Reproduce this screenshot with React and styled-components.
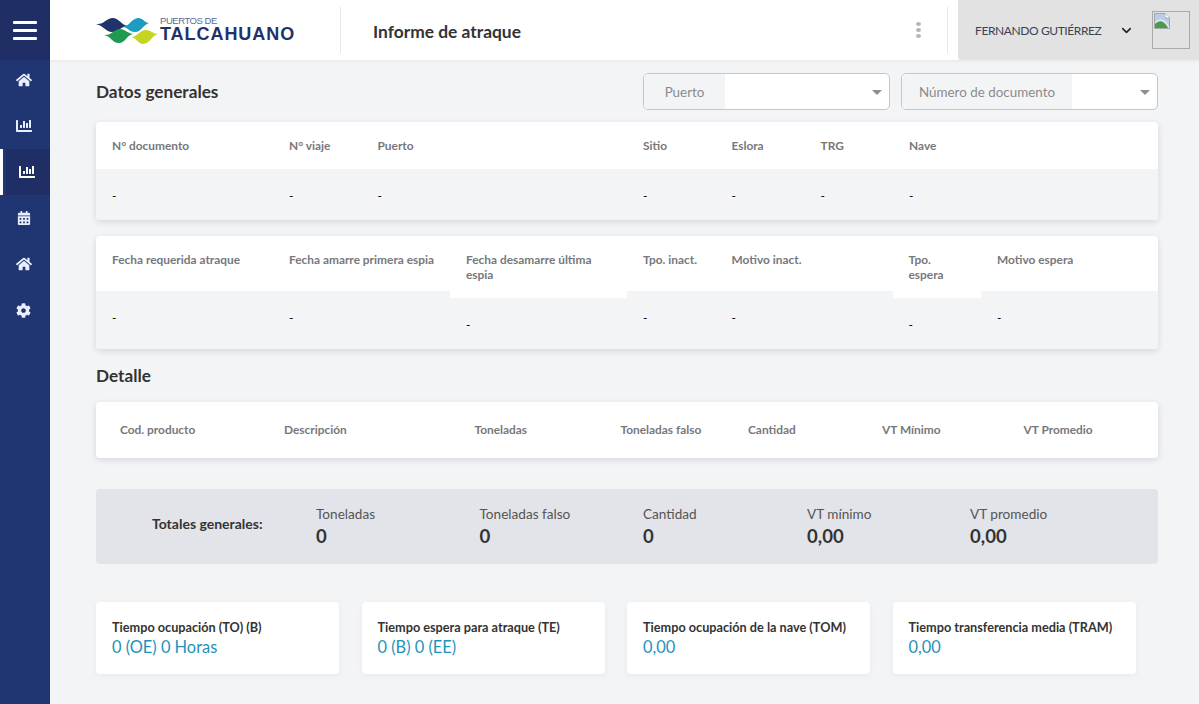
import React from "react";
import styled, { createGlobalStyle } from "styled-components";
import { FaHome, FaChartBar, FaCalendarAlt, FaCog } from "react-icons/fa";
import { LuChevronDown } from "react-icons/lu";

const Global = createGlobalStyle`
  html, body { margin: 0; padding: 0; height: 100%; overflow: hidden; }
  body { background: #f3f4f6; font-family: "Lato", "Noto Sans", sans-serif; color: #333; }
  * { box-sizing: border-box; }
`;

const Shell = styled.div`display: flex; width: 1199px; height: 704px; overflow: hidden;`;
const Sidebar = styled.nav`width: 50px; flex: none; background: #203673; display: flex; flex-direction: column;`;
const Burger = styled.div`
  height: 60px; background: #1f2f66; display: flex; flex-direction: column; justify-content: center; align-items: center; gap: 5px;
  span { display: block; width: 24px; height: 3px; background: #fff; border-radius: 1px; }
`;
const NavItem = styled.div`
  height: ${p => p.$h || 46}px; display: flex; align-items: center; justify-content: center; color: #e8eefc; font-size: 16px;
  padding-right: 3px;
  ${p => p.$first && `padding-bottom: 4px;`}
  ${p => p.$active && `
    color: #fff; padding-right: 0; border-left: 3px solid #fff;
    background: linear-gradient(to right, #203673 3px, #1f2f66 3px);
  `}
`;
const Main = styled.div`flex: 1; min-width: 0; display: flex; flex-direction: column;`;
const Header = styled.header`
  height: 60px; flex: none; background: #fff; display: flex; align-items: center; box-shadow: 0 1px 3px rgba(0,0,0,.06); position: relative;
`;
const LogoWrap = styled.div`width: 290px; height: 60px; flex: none; padding-left: 46px; display: flex; align-items: center; gap: 2px;`;
const LogoText = styled.div`display: flex; flex-direction: column; line-height: 1; margin-top: -2px;`;
const LogoTop = styled.span`font-size: 9.5px; color: #5c6b98; letter-spacing: -.45px; font-family: "Liberation Sans", sans-serif; line-height: 10px;`;
const LogoBottom = styled.span`font-size: 18px; font-weight: 700; color: #1f3269; letter-spacing: .95px; font-family: "Liberation Sans", sans-serif; line-height: 17px;`;
const VRule = styled.div`width: 1px; height: 46px; background: #e6e7ea;`;
const PageTitle = styled.h1`margin: 2px 0 0 32px; font-size: 17.4px; font-weight: 700; color: #333; flex: 1;`;
const Dots = styled.div`
  width: 4px; display: flex; flex-direction: column; gap: 2px; margin-right: 27px;
  i { width: 5px; height: 4px; border-radius: 50%; background: #b5b5b5; display: block; }
`;
const User = styled.div`
  width: 241px; height: 60px; margin-left: 10px; background: #e2e2e2; border-bottom-left-radius: 3px; display: flex; align-items: center; padding-left: 17px; color: #3a4257; font-size: 12px; letter-spacing: -.4px;
`;
const UserName = styled.span`width: 144px; white-space: nowrap;`;
const Avatar = styled.div`width: 38px; height: 38px; border: 1px solid #a9a9a9; margin-left: 18px; padding: 1px;`;

const Content = styled.main`flex: 1; padding: 13px 41px 0 46px; display: flex; flex-direction: column;`;
const TopRow = styled.div`display: flex; align-items: center; height: 37px;`;
const SectionTitle = styled.h2`margin: 0; font-size: 17.2px; font-weight: 700; color: #333; flex: 1;`;
const DetailTitle = styled(SectionTitle)`flex: none; margin-top: 16px; line-height: 22px;`;
const Select = styled.div`
  width: ${p => p.$w}px; height: 37px; margin-left: ${p => p.$ml || 0}px; display: flex; background: #fff; border: 1px solid #c6c7c9; border-radius: 5px; overflow: hidden; position: relative;
`;
const SelectLabel = styled.div`
  width: ${p => p.$w}px; background: #f3f4f6; color: #8b8b8b; font-size: 13.4px; display: flex; align-items: center; justify-content: center;
`;
const Caret = styled.i`
  position: absolute; right: 7px; top: 16px; width: 0; height: 0; border-left: 5px solid transparent; border-right: 5px solid transparent; border-top: 5px solid #8e8e8e;
`;
const Card = styled.section`
  background: #fff; border-radius: 4px; box-shadow: 0 2px 6px rgba(30,40,80,.14); overflow: hidden; margin-top: ${p => p.$mt}px;
`;
const GridRow = styled.div`
  display: grid; grid-template-columns: ${p => p.$cols}; height: ${p => p.$h}px; background: ${p => p.$bg || "transparent"};
`;
const Cell = styled.div`
  padding: ${p => p.$pt}px 16px 0 16px; font-size: 11.9px; line-height: 15px; background: ${p => p.$bg || "transparent"}; color: ${p => p.$dark ? "#000" : "#77787c"}; font-weight: ${p => p.$dark ? 400 : 700}; height: ${p => p.$h ? p.$h + "px" : "auto"}; position: relative; z-index: 1;
  margin-right: ${p => p.$tight ? -6 : 0}px; padding-right: ${p => p.$tight ? 6 : 16}px;
`;
const Detail = styled.div`
  display: grid; grid-template-columns: 164px 190.5px 146px 127.5px 134px 141.5px 1fr; height: 56px; align-items: center; padding: 0 0 2px 24px; color: #77787c; font-size: 11.9px; font-weight: 700;
`;
const Totals = styled.section`
  height: 75px; margin-top: 31px; background: #e2e4e9; border-radius: 4px; display: grid; grid-template-columns: 220px 163.5px 163.5px 164px 163px 1fr; align-items: center; color: #333;
`;
const TotalHead = styled.div`font-size: 14px; font-weight: 700; padding-left: 56px; white-space: nowrap; margin-top: -6px;`;
const TotalCol = styled.div`display: flex; flex-direction: column; font-size: 13.6px; color: #555; line-height: 17px; margin-top: 3px;`;
const TotalVal = styled.b`font-size: 18.6px; color: #333; line-height: 27px;`;
const Kpis = styled.div`display: flex; gap: 22.5px; margin-top: 38px;`;
const Kpi = styled.div`
  width: 243px; height: 72px; background: #fff; border-radius: 4px; padding: 18px 16px 0; box-shadow: 0 2px 6px rgba(30,40,80,.05);
`;
const KpiTitle = styled.div`font-size: 12.7px; font-weight: 700; color: #333; line-height: 15px; white-space: nowrap;`;
const KpiValue = styled.div`font-size: 16.4px; color: #1f93b8; line-height: 21px; margin-top: 1px; white-space: nowrap;`;

const Waves = () => (
  <svg width="62" height="27" viewBox="0 0 62 27">
    <path d="M0 7 C8 8 10 1 17 1 C22 1 25 7 31 9 C25 10 22 15 16 15 C10 15 8 9 0 7Z" fill="#1f3269" />
    <path d="M26 10 C33 10 36 1 42 1 C47 1 49 6 53 6 C47 8 45 15 39 15 C33 15 32 10 26 10Z" fill="#1c9cc0" />
    <path d="M8 18 C15 19 18 12 24 12 C29 12 31 16 37 17 C31 18 29 26 23 26 C16 26 15 19 8 18Z" fill="#1f9a50" />
    <path d="M35 20 C41 20 44 13 50 13 C55 13 57 17 62 17 C56 18 54 27 47 27 C42 27 41 21 35 20Z" fill="#c4d420" />
  </svg>
);

const BrokenImage = () => (
  <svg width="16" height="16" viewBox="0 0 16 16">
    <path d="M.5.5H11L15.5 5V15.5H.5Z" fill="#dfe8f2" stroke="#a4a8ad" />
    <path d="M1 15 L1 11 C5 7 9 7 13 13 L14 15Z" fill="#4f9a48" />
    <path d="M1 9 L1 1 L10 1 L10 5 L15 5 L15 13 C10 5 5 5 1 9Z" fill="#b8cde8" />
    <path d="M11 .5V5H15.5" fill="#fff" stroke="#a4a8ad" />
  </svg>
);

const cols = "177px 88.5px 265.5px 88.5px 89px 88.5px 88.5px 1fr";
const cols2 = "177px 177px 177px 88.5px 177px 88.5px 1fr";

const row1 = ["N° documento", "N° viaje", "Puerto", "Sitio", "Eslora", "TRG", "Nave", ""];
const row2 = ["Fecha requerida atraque", "Fecha amarre primera espia", "Fecha desamarre última espia", "Tpo. inact.", "Motivo inact.", "Tpo. espera", "Motivo espera"];
const details = ["Cod. producto", "Descripción", "Toneladas", "Toneladas falso", "Cantidad", "VT Mínimo", "VT Promedio"];
const totals = [["Toneladas", "0"], ["Toneladas falso", "0"], ["Cantidad", "0"], ["VT mínimo", "0,00"], ["VT promedio", "0,00"]];
const kpis = [
  ["Tiempo ocupación (TO) (B)", "0 (OE) 0 Horas"],
  ["Tiempo espera para atraque (TE)", "0 (B) 0 (EE)"],
  ["Tiempo ocupación de la nave (TOM)", "0,00"],
  ["Tiempo transferencia media (TRAM)", "0,00"],
];
const tall = new Set([2, 5]);

export default function App() {
  return (
    <Shell>
      <Global />
      <Sidebar>
        <Burger><span /><span /><span /></Burger>
        <NavItem $h={43} $first><FaHome /></NavItem>
        <NavItem><FaChartBar /></NavItem>
        <NavItem $active><FaChartBar /></NavItem>
        <NavItem><FaCalendarAlt size={14} /></NavItem>
        <NavItem><FaHome /></NavItem>
        <NavItem><FaCog size={15} /></NavItem>
      </Sidebar>
      <Main>
        <Header>
          <LogoWrap>
            <Waves />
            <LogoText>
              <LogoTop>PUERTOS DE</LogoTop>
              <LogoBottom>TALCAHUANO</LogoBottom>
            </LogoText>
          </LogoWrap>
          <VRule />
          <PageTitle>Informe de atraque</PageTitle>
          <Dots><i /><i /><i /></Dots>
          <VRule />
          <User>
            <UserName>FERNANDO GUTIÉRREZ</UserName>
            <LuChevronDown size={15} color="#222" strokeWidth={2.5} />
            <Avatar><BrokenImage /></Avatar>
          </User>
        </Header>
        <Content>
          <TopRow>
            <SectionTitle>Datos generales</SectionTitle>
            <Select $w={247}><SelectLabel $w={81}>Puerto</SelectLabel><Caret /></Select>
            <Select $w={257} $ml={11}><SelectLabel $w={170}>Número de documento</SelectLabel><Caret /></Select>
          </TopRow>
          <Card $mt={12}>
            <GridRow $cols={cols} $h={47}>{row1.map((t, i) => <Cell key={i} $pt={16}>{t}</Cell>)}</GridRow>
            <GridRow $cols={cols} $h={51} $bg="#f3f4f6">{row1.map((t, i) => <Cell key={i} $dark $pt={19}>{t && "-"}</Cell>)}</GridRow>
          </Card>
          <Card $mt={16}>
            <GridRow $cols={cols2} $h={55}>{row2.map((t, i) => <Cell key={i} $pt={16} $tight={i < 2} $h={tall.has(i) ? 62 : 55} $bg={tall.has(i) ? "#fff" : "transparent"}>{t}</Cell>)}</GridRow>
            <GridRow $cols={cols2} $h={58} $bg="#f3f4f6">{row2.map((t, i) => <Cell key={i} $dark $pt={tall.has(i) ? 26 : 19}>-</Cell>)}</GridRow>
          </Card>
          <DetailTitle>Detalle</DetailTitle>
          <Card $mt={15}>
            <Detail>{details.map(t => <span key={t}>{t}</span>)}</Detail>
          </Card>
          <Totals>
            <TotalHead>Totales generales:</TotalHead>
            {totals.map(([l, v]) => <TotalCol key={l}>{l}<TotalVal>{v}</TotalVal></TotalCol>)}
          </Totals>
          <Kpis>
            {kpis.map(([t, v]) => <Kpi key={t}><KpiTitle>{t}</KpiTitle><KpiValue>{v}</KpiValue></Kpi>)}
          </Kpis>
        </Content>
      </Main>
    </Shell>
  );
}
